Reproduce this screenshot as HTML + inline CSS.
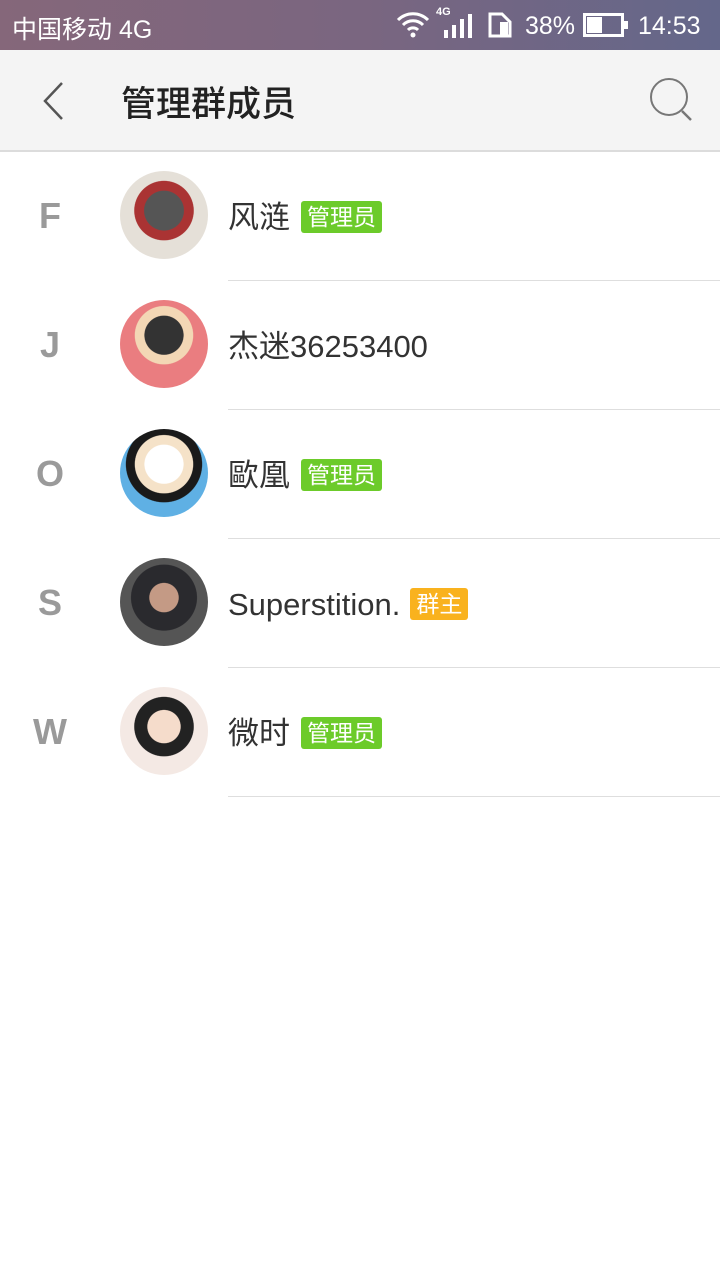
<!DOCTYPE html>
<html><head><meta charset="utf-8"><style>
*{margin:0;padding:0;box-sizing:border-box}
body{width:720px;height:1280px;background:#fff;font-family:"Liberation Sans","Noto Sans CJK SC",sans-serif;position:relative;overflow:hidden}
.sb{position:absolute;left:0;top:0;width:720px;height:50px;background:linear-gradient(90deg,#85677a,#7a6680 50%,#64678a);color:#fff;font-size:25px}
.hd{position:absolute;left:0;top:50px;width:720px;height:102px;background:#f4f4f4;border-bottom:2px solid #dcdcdc}
.row{position:absolute;left:0;width:720px;height:129px}
.l{position:absolute;left:0;width:100px;text-align:center;top:43px;font-size:36px;font-weight:bold;color:#9a9a9a}
.av{position:absolute;left:120px;top:19px;width:88px;height:88px;border-radius:50%;overflow:hidden}
.nm{position:absolute;left:228px;top:46px;font-size:31px;color:#333;line-height:40px;white-space:nowrap}
.bd{display:inline-block;vertical-align:top;margin-top:3px;margin-left:11px;height:32px;line-height:32px;padding:0 6px;border-radius:3px;color:#fff;font-size:23px}
.g{background:#6ccb2a}.o{background:#f9b21e}
.ln{position:absolute;left:228px;right:0;bottom:0;height:1px;background:#dedede}
</style></head><body>
<div class="sb">
<span style="position:absolute;left:12px;top:10px">中国移动 4G</span>
<svg style="position:absolute;left:395px;top:10px" width="36" height="28" viewBox="0 0 36 28"><path d="M3 10a21 21 0 0 1 30 0M8 15a14 14 0 0 1 20 0M13 20a7 7 0 0 1 10 0" stroke="#fff" stroke-width="3" fill="none"/><circle cx="18" cy="25" r="2.5" fill="#fff"/></svg>
<span style="position:absolute;left:436px;top:6px;font-size:11px;font-weight:bold">4G</span>
<svg style="position:absolute;left:444px;top:14px" width="32" height="24"><rect x="0" y="16" width="4" height="8" fill="#fff"/><rect x="8" y="11" width="4" height="13" fill="#fff"/><rect x="16" y="5" width="4" height="19" fill="#fff"/><rect x="24" y="0" width="4" height="24" fill="#fff"/></svg>
<svg style="position:absolute;left:488px;top:12px" width="24" height="26"><path d="M2 2h12l8 8v14H2z" fill="none" stroke="#fff" stroke-width="3"/><rect x="12" y="10" width="8" height="14" fill="#fff"/></svg>
<span style="position:absolute;left:525px;top:12px">38%</span>
<svg style="position:absolute;left:583px;top:13px" width="46" height="24"><rect x="1.5" y="1.5" width="38" height="21" fill="none" stroke="#fff" stroke-width="3"/><rect x="4" y="4" width="15" height="16" fill="#fff"/><rect x="41" y="8" width="4" height="8" fill="#fff"/></svg>
<span style="position:absolute;left:638px;top:12px">14:53</span>
</div>
<div class="hd">
<svg style="position:absolute;left:38px;top:30px" width="30" height="42"><path d="M24 3L7 21l17 18" stroke="#555" stroke-width="2.5" fill="none"/></svg>
<span style="position:absolute;left:121px;top:26px;font-size:35px;color:#222;font-weight:500">管理群成员</span>
<svg style="position:absolute;left:648px;top:28px" width="46" height="46"><circle cx="21" cy="19" r="18" stroke="#777" stroke-width="2" fill="none"/><path d="M34 33l9 9" stroke="#777" stroke-width="2.5"/></svg>
</div>
<div class="row" style="top:152px"><div class="l">F</div><div class="av" style="background:radial-gradient(circle at 50% 45%,#555 0 30%,#a33 31% 45%,#e5e0d8 46%)"></div><div class="nm">风涟<span class="bd g">管理员</span></div><div class="ln"></div></div>
<div class="row" style="top:281px"><div class="l">J</div><div class="av" style="background:radial-gradient(circle at 50% 40%,#333 0 28%,#f3d7b5 29% 42%,#ea7d80 43%)"></div><div class="nm">杰迷36253400</div><div class="ln"></div></div>
<div class="row" style="top:410px"><div class="l">O</div><div class="av" style="background:radial-gradient(circle at 50% 40%,#fff 0 28%,#f5e2c8 29% 42%,#1a1a1a 43% 55%,#5fb0e4 56%)"></div><div class="nm">歐凰<span class="bd g">管理员</span></div><div class="ln"></div></div>
<div class="row" style="top:539px"><div class="l">S</div><div class="av" style="background:radial-gradient(circle at 50% 45%,#c49a85 0 22%,#2a2a2e 23% 50%,#555 51%)"></div><div class="nm">Superstition.<span class="bd o" style="margin-left:10px">群主</span></div><div class="ln"></div></div>
<div class="row" style="top:668px"><div class="l">W</div><div class="av" style="background:radial-gradient(circle at 50% 45%,#f5dccb 0 25%,#222 26% 45%,#f4e9e4 46%)"></div><div class="nm">微时<span class="bd g">管理员</span></div><div class="ln"></div></div>
</body></html>
